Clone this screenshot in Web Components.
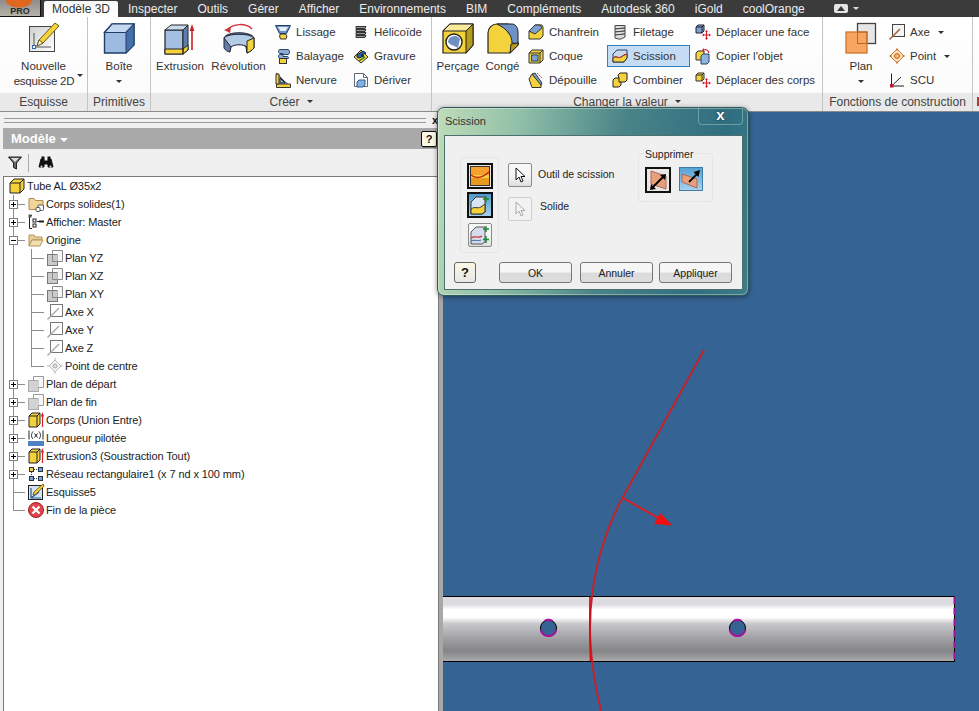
<!DOCTYPE html>
<html lang="fr">
<head>
<meta charset="utf-8">
<title>Scission</title>
<style>
  html, body { margin: 0; height: 100%; overflow: hidden; background: #f0f0f0; }
  body { font: 12px "Liberation Sans", Arial, sans-serif; color: #333; }
</style>
</head>
<body>
<cad-app>
  <cad-tabbar>
    <cad-tab active>Modèle 3D</cad-tab>
    <cad-tab>Inspecter</cad-tab>
    <cad-tab>Outils</cad-tab>
    <cad-tab>Gérer</cad-tab>
    <cad-tab>Afficher</cad-tab>
    <cad-tab>Environnements</cad-tab>
    <cad-tab>BIM</cad-tab>
    <cad-tab>Compléments</cad-tab>
    <cad-tab>Autodesk 360</cad-tab>
    <cad-tab>iGold</cad-tab>
    <cad-tab>coolOrange</cad-tab>
  </cad-tabbar>

  <cad-ribbon>
    <cad-panel label="Esquisse" style="width:88px">
      <cad-big icon="sketch" style="width:87px">Nouvelle<br><span style="margin-left:10px;letter-spacing:-.25px">esquisse 2D<cad-caret high></cad-caret></span></cad-big>
    </cad-panel>
    <cad-panel label="Primitives" style="width:63px">
      <cad-big icon="box" style="width:62px">Boîte<br><cad-caret></cad-caret></cad-big>
    </cad-panel>
    <cad-panel label="Créer" menu style="width:281px">
      <cad-big icon="extrude" style="width:50px;margin-left:4px">Extrusion</cad-big>
      <cad-big icon="revolve" style="width:59px;margin-left:4px">Révolution</cad-big>
      <cad-col style="width:78px;margin-left:2px">
        <cad-tool icon="loft">Lissage</cad-tool>
        <cad-tool icon="sweep">Balayage</cad-tool>
        <cad-tool icon="rib">Nervure</cad-tool>
      </cad-col>
      <cad-col>
        <cad-tool icon="coil">Hélicoïde</cad-tool>
        <cad-tool icon="emboss">Gravure</cad-tool>
        <cad-tool icon="derive">Dériver</cad-tool>
      </cad-col>
    </cad-panel>
    <cad-panel label="Changer la valeur" menu style="width:391px">
      <cad-big icon="hole" style="width:46px;margin-left:3px">Perçage</cad-big>
      <cad-big icon="fillet" style="width:39px;margin-left:2px">Congé</cad-big>
      <cad-col style="width:84px;margin-left:1px">
        <cad-tool icon="chamfer">Chanfrein</cad-tool>
        <cad-tool icon="shell">Coque</cad-tool>
        <cad-tool icon="draft">Dépouille</cad-tool>
      </cad-col>
      <cad-col style="width:83px">
        <cad-tool icon="thread">Filetage</cad-tool>
        <cad-tool icon="split" active>Scission</cad-tool>
        <cad-tool icon="combine">Combiner</cad-tool>
      </cad-col>
      <cad-col>
        <cad-tool icon="moveface">Déplacer une face</cad-tool>
        <cad-tool icon="copy">Copier l'objet</cad-tool>
        <cad-tool icon="movebody">Déplacer des corps</cad-tool>
      </cad-col>
    </cad-panel>
    <cad-panel label="Fonctions de construction" style="width:150px">
      <cad-big icon="plane" style="width:50px;margin-left:13px">Plan<br><cad-caret></cad-caret></cad-big>
      <cad-col style="margin-left:-2px">
        <cad-tool icon="axis">Axe<cad-caret side></cad-caret></cad-tool>
        <cad-tool icon="point">Point<cad-caret side></cad-caret></cad-tool>
        <cad-tool icon="ucs">SCU</cad-tool>
      </cad-col>
    </cad-panel>
  </cad-ribbon>

  <cad-main>
    <cad-browser>
      <cad-tree-row icon="part" root>Tube AL Ø35x2</cad-tree-row>
      <cad-tree-row icon="bodies" toggle="plus">Corps solides(1)</cad-tree-row>
      <cad-tree-row icon="viewrep" toggle="plus">Afficher: Master</cad-tree-row>
      <cad-tree-row icon="folder" toggle="minus">Origine</cad-tree-row>
      <cad-tree-row icon="workplane" child>Plan YZ</cad-tree-row>
      <cad-tree-row icon="workplane" child>Plan XZ</cad-tree-row>
      <cad-tree-row icon="workplane" child>Plan XY</cad-tree-row>
      <cad-tree-row icon="workaxis" child>Axe X</cad-tree-row>
      <cad-tree-row icon="workaxis" child>Axe Y</cad-tree-row>
      <cad-tree-row icon="workaxis" child>Axe Z</cad-tree-row>
      <cad-tree-row icon="center" child last>Point de centre</cad-tree-row>
      <cad-tree-row icon="plane2" toggle="plus">Plan de départ</cad-tree-row>
      <cad-tree-row icon="plane2" toggle="plus">Plan de fin</cad-tree-row>
      <cad-tree-row icon="feature" toggle="plus">Corps (Union Entre)</cad-tree-row>
      <cad-tree-row icon="param" toggle="plus">Longueur pilotée</cad-tree-row>
      <cad-tree-row icon="feature" toggle="plus">Extrusion3 (Soustraction Tout)</cad-tree-row>
      <cad-tree-row icon="pattern" toggle="plus">Réseau rectangulaire1 (x 7 nd x 100 mm)</cad-tree-row>
      <cad-tree-row icon="sketchnode">Esquisse5</cad-tree-row>
      <cad-tree-row icon="end" end>Fin de la pièce</cad-tree-row>
    </cad-browser>
    <cad-viewport></cad-viewport>
  </cad-main>

  <cad-dialog heading="Scission"></cad-dialog>
</cad-app>

<script>
const Y = "#f4d23c", R = "#d8202a";

// every icon: [viewBox size, svg markup]
const ICONS = {
  sketch: [32, `<defs><linearGradient id="g" x1="0" y1="0" x2="1" y2="1"><stop offset="0" stop-color="#cfcfcf"/><stop offset="1" stop-color="#fff"/></linearGradient></defs>
    <rect x="1.500" y="4.500" width="25" height="25" fill="url(#g)" stroke="#444"/>
    <path d="M6 11v14h17" fill="none" stroke="#555"/><rect x="4.500" y="23.500" width="3" height="3" fill="#fff" stroke="#2a62b8"/>
    <path d="M27 1l4 3-16 17-6 3 2-6z" fill="${Y}" stroke="#6b5a14"/><path d="M9 24l2-6 4 3z" fill="#fff" stroke="#6b5a14"/>`],
  box: [32, `<path d="M1.500 10.500L9 2h22v21l-8 8H1.500z" fill="#9dbbe0" stroke="#1f3c6b" stroke-width="1.400"/><path d="M1.500 10.500H23L31 2H9z" fill="#c6d8ef" stroke="#1f3c6b" stroke-width="1.200"/><path d="M23 10.500L31 2v21l-8 8z" fill="#456fa8" stroke="#1f3c6b"/>`],
  extrude: [32, `<path d="M1 8h18v24H1z" fill="#a3bfe2" stroke="#222" stroke-width="1.200"/><path d="M1 8l6-5h17l-5 5z" fill="#c9daef" stroke="#222"/><path d="M19 8l5-5v25l-5 4z" fill="#5d7fb0" stroke="#222"/><path d="M1 27h18v5H1zM19 27l5-4v5l-5 4z" fill="${Y}" stroke="#222"/><path d="M28 28V6" stroke="#c8202a" stroke-width="1.600"/><path d="M25.600 9L28 2l2.400 7z" fill="#c8202a"/>`],
  revolve: [32, `<path d="M4 8C10 1 23 1 29 7" fill="none" stroke="#d0343a" stroke-width="1.500"/><path d="M1 8l7-3-1 6z" fill="#d0343a"/>
    <path d="M1 16c2-7 28-7 30 0v10c-3 3-5 4-7 5l-1-6c-3-4-12-4-15 0l-1 5c-2 0-5-2-6-4z" fill="#5f7ea8" stroke="#223"/><path d="M1 16c4-5 26-5 30 0l-7 9c-4-3-12-3-16 0z" fill="#b4cbe5" stroke="#223"/><path d="M24 19l7-3v10c-2 2-4 4-7 5z" fill="${Y}" stroke="#222"/>`],
  hole: [32, `<path d="M1 9L8 2h23v21l-7 8H1z" fill="${Y}" stroke="#222" stroke-width="1.200"/><path d="M1 9h23l7-7H8z" fill="#f9ea9a" stroke="#222"/><path d="M24 9l7-7v21l-7 8z" fill="#b79b1c" stroke="#222"/><circle cx="12" cy="20" r="8" fill="#fff" stroke="#222" stroke-width="1.400"/><path d="M6 20a6.500 6.500 0 0 1 12-3l-2 9c-5-3-8-3-10-6z" fill="#6e8fc0"/>`],
  fillet: [32, `<path d="M1 31V11C1 6 5 2 10 2h11v8l10 10v3l-8 8z" fill="${Y}" stroke="#222" stroke-width="1.200"/><path d="M10 2h15c3 0 6 3 6 8v12l-6-1c0-8-5-14-15-19z" fill="#6f92c6" stroke="#222"/><path d="M23 31l8-8v-2l-7 1z" fill="#b79b1c" stroke="#222"/>`],
  loft: [16, `<path d="M.5 1.500h15l-4 8h-7z" fill="#6d93c6" stroke="#223f6b"/><path d="M3 3h10l-2.500 4h-5z" fill="#e6eef8"/><path d="M5.500 10h5l1.500 2-1 3H5.500l-1-3z" fill="${Y}" stroke="#333"/>`],
  sweep: [16, `<path d="M5 1.500h8c2 0 2 5 0 5H8v2h4c2 0 2 2 1 2H5C3 10 3 6 5 6.500h3v-1H5C3 5 3 1 5 1.500z" fill="#8fadd3" stroke="#2a446c"/><rect x="4.500" y="10.500" width="7" height="5" fill="${Y}" stroke="#333"/>`],
  rib: [16, `<path d="M1.500 1L9 9l6 5H1.500z" fill="#cfdcf0" stroke="#223"/><path d="M1.500 12h14v3.500H1.500z" fill="${Y}" stroke="#333"/><path d="M1 2h3v10H1z" fill="${Y}" stroke="#333"/><path d="M5 6l5 5H5z" fill="#8fadd3" stroke="#223"/>`],
  coil: [16, `<g fill="#999" stroke="#333"><path d="M3 2.500h10l-1 2H3z"/><path d="M3 5.500h10l-1 2H3z"/><path d="M3 8.500h10l-1 2H3z"/><path d="M3 11.500h10l-1 2H3z"/></g>`],
  emboss: [16, `<path d="M1 9l7-7 7 7-7 6z" fill="${Y}" stroke="#333"/><path d="M4 7l6-4 3 2-5 2 3 1-5 2-2-1z" fill="#2e66ae" stroke="#123"/><path d="M6 13l6-4" stroke="#2a7a2a" stroke-width="1.400"/>`],
  derive: [16, `<path d="M1.500 1.500h9l4 4v9h-13z" fill="#fff" stroke="#667"/><path d="M10.500 1.500v4h4" fill="none" stroke="#667"/><path d="M4 10l2-2h6v5l-2 2H4z" fill="#86b1de" stroke="#2b5a90"/>`],
  chamfer: [16, `<path d="M1 7l6-6h7l1 2v9l-3 3H1z" fill="${Y}" stroke="#333"/><path d="M1 7l6-6h5l2 3-7 6z" fill="#7da2d2" stroke="#333"/>`],
  shell: [16, `<path d="M1 5l3-3h11v10l-3 3H1z" fill="${Y}" stroke="#333"/><path d="M1 5h11l3-3" fill="none" stroke="#333"/><path d="M12 5v10" stroke="#333"/><rect x="3.500" y="7" width="6.500" height="6" fill="#7da2d2" stroke="#26456f"/>`],
  draft: [16, `<path d="M1 7l3-5 9 10v3.500H4z" fill="${Y}" stroke="#333"/><path d="M4 2l3-1 7 10-1 2z" fill="#7da2d2" stroke="#333"/><path d="M9 1l5 5" stroke="#c8303a" stroke-dasharray="2 1" fill="none"/>`],
  thread: [16, `<g fill="#ddd" stroke="#444"><path d="M3 1.500h10v2.500L3 5z"/><path d="M3 5l10-1v3L3 8z"/><path d="M3 8l10-1v3L3 11z"/><path d="M3 11l10-1v3l-4 2H6l-3-1z"/></g>`],
  split: [16, `<path d="M1 6l4-4h10v8l-3 4H1z" fill="#c8d7ea" stroke="#24456f"/><path d="M1 10c3-3 5 1 8-1l3-2 3-1v4l-3 4H1z" fill="${Y}" stroke="#333"/><path d="M1 10c3-3 5 1 8-1 2-1 3-2 6-3" fill="none" stroke="#c8303a"/>`],
  combine: [16, `<path d="M1 8l2-2h6v7l-2 2H1z" fill="${Y}" stroke="#222"/><path d="M6 3l2-2h7v7l-2 2H7V6z" fill="${Y}" stroke="#222"/>`],
  moveface: [16, `<path d="M1 3l2-2h6v6l-2 2H1z" fill="#7da2d2" stroke="#223"/><path d="M1 3h6v6M7 3l2-2" fill="none" stroke="#223"/><path d="M11.500 7v8M8 11h7" stroke="${R}" stroke-width="1.200"/><path d="M11.500 6l-1.500 2h3zM11.500 16l-1.500-2h3zM7 11l2-1.500v3zM16 11l-2-1.500v3z" fill="${R}"/>`],
  copy: [16, `<path d="M1 5l2-2h6v7l-2 2H1z" fill="${Y}" stroke="#333"/><path d="M6 8l2-2h6v8l-2 2H6z" fill="#8fb4de" stroke="#24456f"/><path d="M9 2c2-1 4 0 5 3" fill="none" stroke="${R}" stroke-width="1.200"/><path d="M9 0v4l-2-2z" fill="${R}"/>`],
  movebody: [16, `<path d="M1 3l2-2h6v6l-2 2H1z" fill="${Y}" stroke="#333"/><path d="M1 3h6v6M7 3l2-2" fill="none" stroke="#333"/><path d="M11.500 7v8M8 11h7" stroke="${R}" stroke-width="1.200"/><path d="M11.500 6l-1.500 2h3zM11.500 16l-1.500-2h3zM7 11l2-1.500v3zM16 11l-2-1.500v3z" fill="${R}"/>`],
  axis: [16, `<rect x="3.500" y=".5" width="12" height="12" fill="#f4f4f4" stroke="#444"/><path d="M.5 15.500L11 5" stroke="#a5683a" stroke-width="1.600"/>`],
  point: [16, `<path d="M8 1l7 7-7 7-7-7z" fill="#fbe3c6" stroke="#d6792c"/><circle cx="8" cy="8" r="2.500" fill="#f7b36b" stroke="#c76a1f"/><path d="M0 8h3M13 8h3M8 0v3M8 13v3" stroke="#d6792c"/>`],
  ucs: [16, `<path d="M2.500 14V1.500M2.500 14H15M2.500 14L12 5" stroke="#222" fill="none"/><rect x="1" y="12" width="3.500" height="3.500" fill="#b81c30"/>`],
  plane: [32, `<rect x="12.500" y="1.500" width="18" height="20" fill="#e6e6e6" stroke="#444" stroke-width="1.300"/><rect x="1" y="10" width="21" height="21" fill="#f6a661" stroke="#d0742a" stroke-width="1.300"/><rect x="12.500" y="10" width="9.500" height="11.500" fill="none" stroke="#b7692c"/>`],
  part: [16, `<path d="M1 5l4-4h10v10l-4 4H1z" fill="${Y}" stroke="#222"/><path d="M1 5h10l4-4M11 5v10" fill="none" stroke="#222"/>`],
  bodies: [16, `<path d="M1 2.500h5l1.500 2H15v9H1z" fill="#f0d498" stroke="#a98c50"/><rect x="10" y="9" width="5.500" height="5.500" rx="1" fill="#fff" stroke="#555"/><rect x="8" y="11.500" width="4" height="4" rx="1" fill="#fff" stroke="#555"/>`],
  viewrep: [16, `<path d="M4 1.500H1.500v13H4M9 7.500h2" fill="none" stroke="#222"/><rect x=".5" y=".5" width="3" height="3" fill="#555"/><rect x="5" y="5" width="3" height="3" fill="#fff" stroke="#222"/><rect x="5" y="10" width="3" height="3" fill="#fff" stroke="#222"/><path d="M11 7.500h5" stroke="#222" stroke-width="2"/>`],
  folder: [16, `<path d="M1 3h5l1 2h7v3H4l-3 6z" fill="#e9cf94" stroke="#b3955a"/><path d="M1 14l3-6h11l-3 6z" fill="#f2dfaf" stroke="#b3955a"/>`],
  workplane: [16, `<rect x=".5" y="4.500" width="10" height="11" fill="#cacaca" stroke="#777"/><path d="M10.500 .5h5v11h-5z" fill="#f6f6f6"/><path d="M5.500 .5h10v11h-10zM5.500 4.500v7h5" fill="none" stroke="#8a8a8a"/>`],
  plane2: [16, `<rect x=".5" y="4.500" width="10" height="11" fill="#d2d2d2" stroke="#aaa"/><path d="M10.500 .5h5v11h-5z" fill="#f6f6f6"/><path d="M5.500 4.500v-4h10v11h-5" fill="none" stroke="#999"/>`],
  workaxis: [16, `<rect x="3.500" y=".5" width="12" height="12" fill="#fff" stroke="#777"/><path d="M.5 15.500L12 4" stroke="#aaa" stroke-width="1.500"/>`],
  center: [16, `<path d="M8 2l6 6-6 6-6-6z" fill="#f4f4f4" stroke="#bbb"/><circle cx="8" cy="8" r="2" fill="#ddd" stroke="#aaa"/><path d="M0 8h2M14 8h2M8 0v2M8 14v2" stroke="#bbb"/>`],
  feature: [16, `<path d="M1 4l3-3h8v11l-3 3H1z" fill="${Y}" stroke="#222"/><path d="M1 4h8l3-3M9 4v11" fill="none" stroke="#222"/><path d="M14.500 15V3" stroke="${R}" stroke-width="1.200"/><path d="M12.800 4.500L14.500 0l1.500 4.500z" fill="${R}"/>`],
  param: [16, `<rect x="0" y="11" width="16" height="5" fill="#4f83c4"/><path d="M1 .5v9M15 .5v9" stroke="#222"/><path d="M5 1.500C3 4 3 7 5 9M11 1.500c2 2.500 2 5.500 0 7.500M6.500 3.500l3 4M9.500 3.500l-3 4" fill="none" stroke="#222"/>`],
  pattern: [16, `<rect x="1.500" y="1.500" width="4" height="4" fill="${Y}" stroke="#333"/><rect x="10.500" y="1.500" width="4" height="4" fill="#7da2d2" stroke="#234"/><rect x="1.500" y="10.500" width="4" height="4" fill="#7da2d2" stroke="#234"/><rect x="10.500" y="10.500" width="4" height="4" fill="#7da2d2" stroke="#234"/><path d="M6 3.500h4M3.500 6v4M6 12.500h4" stroke="#333" stroke-dasharray="1 1"/>`],
  sketchnode: [16, `<rect x=".5" y="1.500" width="14" height="14" fill="#d5e4f5" stroke="#222"/><path d="M3 4v10h10M3 14l8-6" fill="none" stroke="#2a5a98" stroke-width="1.200"/><path d="M15 0l1 2-8 8-3 1 1-3z" fill="${Y}" stroke="#7a6514"/>`],
  end: [16, `<circle cx="8" cy="8" r="7.500" fill="#e0454c" stroke="#a11d24"/><path d="M4.500 4.500l7 7M11.500 4.500l-7 7" stroke="#fff" stroke-width="2.200"/>`],
  funnel: [14, `<path d="M.5 1h13L8.500 7v6l-3-1.500V7z" fill="#666" stroke="#222"/><path d="M3 2h8L7 6z" fill="#ddd"/>`],
  binoculars: [16, `<path d="M1 12l2-8h3v8H1zM10 4h3l2 8h-5zM6 6h4v3H6z" fill="#111" stroke="#111"/><rect x="3.500" y="1.500" width="3" height="3" fill="#111"/><rect x="9.500" y="1.500" width="3" height="3" fill="#111"/><circle cx="3.500" cy="11.500" r="1" fill="#ddd"/><circle cx="12.500" cy="11.500" r="1" fill="#ddd"/>`],
  cursor: [16, `<path d="M4 1v12l3-3 2 5 2-1-2-4.500h4z" fill="#fff" stroke="#111"/>`],
  cursoroff: [16, `<path d="M4 1v12l3-3 2 5 2-1-2-4.500h4z" fill="#f4f4f4" stroke="#aaa"/>`],
  surface: [20, `<rect x=".5" y=".5" width="19" height="19" fill="${Y}" stroke="#333"/><rect x="1" y="1" width="18" height="8" fill="#f6a030"/><rect x="1" y="12" width="18" height="7" fill="#e89a1e"/><path d="M1 9c5 4 11 3 18-3" fill="none" stroke="#c41e20" stroke-width="1.300"/>`],
  solidplus: [20, `<path d="M1 7l5-5h9v15l-3 2H1z" fill="#d7e4f3" stroke="#333"/><path d="M1 14c4-3 6 0 10-2l4-3v8l-3 2H1z" fill="${Y}" stroke="#333"/><path d="M16 1v6M13 4h6" stroke="#1d8a2e" stroke-width="1.500"/>`],
  surfplus: [20, `<path d="M1 7l5-5h9v15l-3 2H1z" fill="#d7dcec" stroke="#555"/><path d="M1 13c5-3 7 1 11-2" fill="none" stroke="#c8303a" stroke-width="1.200"/><path d="M1 16c4-2 7 1 10-1" fill="none" stroke="#3a6fb0"/><path d="M16 1v6M13 4h6M16 11v7M13 14.500h6" stroke="#1d8a2e" stroke-width="1.500"/>`],
  delone: [20, `<path d="M3 1l15 5v13L3 14z" fill="#e7a078" stroke="#a66"/><path d="M4 18L15 7" stroke="#000" stroke-width="1.800"/><path d="M2 20l1-6 5 5zM18 4l-1 6-5-5z" fill="#000"/>`],
  deltwo: [20, `<path d="M1 5l15 5v9L1 13z" fill="#e7a078" stroke="#a66"/><path d="M8 13L16 5" stroke="#000" stroke-width="1.800"/><path d="M19 1l-1.500 7-5-5z" fill="#000"/>`]
};

class CadIcon extends HTMLElement {
  constructor() {
    super();
    this.attachShadow({ mode: "open" });
  }

  connectedCallback() {
    const [vb, markup] = ICONS[this.getAttribute("name")];
    const size = this.getAttribute("size") || vb;
    this.shadowRoot.innerHTML = `
    <style>:host { display: inline-flex; flex: none; } svg { display: block; overflow: visible; }</style>
    <svg viewBox="0 0 ${vb} ${vb}" width="${size}" height="${size}">${markup}</svg>`;
  }
}

class CadCaret extends HTMLElement {
  constructor() {
    super();
    this.attachShadow({ mode: "open" });
    this.shadowRoot.innerHTML = `
    <style>
      :host {
        display: inline-block;
        width: 0;
        height: 0;
        border-top: 3px solid #333;
        border-left: 3px solid transparent;
        border-right: 3px solid transparent;
        vertical-align: middle;
      }
      :host([high]) { vertical-align: 8px; margin-left: 3px; }
      :host([side]) { margin-left: 8px; }
    </style>`;
  }
}

class CadApp extends HTMLElement {
  constructor() {
    super();
    this.attachShadow({ mode: "open" });
    this.shadowRoot.innerHTML = `
    <style>
      :host { display: flex; flex-direction: column; width: 979px; height: 711px; position: relative; overflow: hidden; }
    </style>
    <slot></slot>`;
  }
}

class CadTabbar extends HTMLElement {
  constructor() {
    super();
    this.attachShadow({ mode: "open" });
    this.shadowRoot.innerHTML = `
    <style>
      :host { display: flex; height: 17px; flex: none; background: #3b3b3b; overflow: hidden; }
      .pro {
        width: 40px;
        height: 16px;
        margin-right: 3px;
        flex: none;
        border: solid #111;
        border-width: 0 1px 1px 0;
        background:
          radial-gradient(ellipse 14px 8px at 19px 0, #e0671e 0 90%, transparent 100%),
          linear-gradient(#8d8d8d, #b5b2a8);
        display: flex;
        justify-content: center;
        align-items: flex-end;
        font: bold 9px "Liberation Sans", sans-serif;
        color: #2a2a2a;
      }
      .extra { display: flex; align-items: center; gap: 5px; margin-left: 19px; }
    </style>
    <div class="pro">PRO</div>
    <slot></slot>
    <div class="extra">
      <svg width="14" height="9" viewBox="0 0 14 9"><rect width="14" height="9" rx="2" fill="#e4e4e4"/><path d="M3 7l4-5 4 5z" fill="#3b3b3b"/></svg>
      <cad-caret style="border-top-color:#ddd"></cad-caret>
    </div>`;
  }
}

class CadTab extends HTMLElement {
  constructor() {
    super();
    this.attachShadow({ mode: "open" });
    this.shadowRoot.innerHTML = `
    <style>
      :host { display: flex; align-items: center; padding: 0 10px; color: #ececec; white-space: nowrap; }
      :host([active]) {
        color: #333;
        margin: 1px 0 0;
        padding: 0 8px;
        background: linear-gradient(#f6f6f6, #ffffff);
        border-radius: 2px 2px 0 0;
      }
    </style>
    <slot></slot>`;
  }
}

class CadRibbon extends HTMLElement {
  constructor() {
    super();
    this.attachShadow({ mode: "open" });
    this.shadowRoot.innerHTML = `
    <style>
      :host {
        display: flex;
        height: 95px;
        flex: none;
        background: linear-gradient(#fff, #fafafa);
        border-bottom: 1px solid #8b8b8b;
        box-sizing: border-box;
      }
      .more { flex: 1; display: flex; align-items: flex-end; }
      .more i { display: block; width: 100%; height: 18px; background: #e9e9e9; }
      .more b { display: block; width: 2px; height: 9px; margin: 4px 0 0 4px; background: #b03a2a; }
    </style>
    <slot></slot>
    <div class="more"><i><b></b></i></div>`;
  }
}

class CadPanel extends HTMLElement {
  constructor() {
    super();
    this.attachShadow({ mode: "open" });
  }

  connectedCallback() {
    const menu = this.hasAttribute("menu") ? `<cad-caret style="margin-left:7px"></cad-caret>` : "";
    this.shadowRoot.innerHTML = `
    <style>
      :host {
        display: flex;
        flex-direction: column;
        flex: none;
        box-sizing: border-box;
        border-right: 1px solid #c4c4c4;
      }
      .tools { flex: 1; display: flex; padding-top: 3px; min-height: 0; font-size: 11.5px; }
      footer {
        height: 18px;
        flex: none;
        box-sizing: border-box;
        padding-bottom: 1px;
        background: #e9e9e9;
        color: #444;
        display: flex;
        justify-content: center;
        align-items: center;
        white-space: nowrap;
      }
    </style>
    <div class="tools"><slot></slot></div>
    <footer>${this.getAttribute("label")}${menu}</footer>`;
  }
}

class CadBig extends HTMLElement {
  constructor() {
    super();
    this.attachShadow({ mode: "open" });
  }

  connectedCallback() {
    this.shadowRoot.innerHTML = `
    <style>
      :host {
        display: flex;
        flex-direction: column;
        align-items: center;
        flex: none;
        padding-top: 2px;
        text-align: center;
        line-height: 15px;
        white-space: nowrap;
      }
      cad-icon { margin-bottom: 5px; }
    </style>
    <cad-icon name="${this.getAttribute("icon")}" size="32"></cad-icon>
    <div><slot></slot></div>`;
  }
}

class CadCol extends HTMLElement {
  constructor() {
    super();
    this.attachShadow({ mode: "open" });
    this.shadowRoot.innerHTML = `
    <style>:host { display: flex; flex-direction: column; flex: none; }</style>
    <slot></slot>`;
  }
}

class CadTool extends HTMLElement {
  constructor() {
    super();
    this.attachShadow({ mode: "open" });
  }

  connectedCallback() {
    this.shadowRoot.innerHTML = `
    <style>
      :host {
        display: flex;
        align-items: center;
        gap: 5px;
        box-sizing: border-box;
        height: 22px;
        margin: 1px 0;
        padding: 0 4px;
        border: 1px solid transparent;
        white-space: nowrap;
      }
      :host([active]) { background: #c5dcf5; border-color: #3b7db8; }
    </style>
    <cad-icon name="${this.getAttribute("icon")}"></cad-icon>
    <span><slot></slot></span>`;
  }
}

class CadMain extends HTMLElement {
  constructor() {
    super();
    this.attachShadow({ mode: "open" });
    this.shadowRoot.innerHTML = `
    <style>:host { display: flex; flex: 1; min-height: 0; }</style>
    <slot></slot>`;
  }
}

class CadBrowser extends HTMLElement {
  constructor() {
    super();
    this.attachShadow({ mode: "open" });
    this.shadowRoot.innerHTML = `
    <style>
      :host {
        display: flex;
        flex-direction: column;
        width: 443px;
        flex: none;
        box-sizing: border-box;
        padding-left: 3px;
        border-right: 4px solid #a8a8a8;
        background: #f0f0f0;
      }
      .grip {
        height: 16px;
        flex: none;
        display: flex;
        align-items: center;
        gap: 6px;
        margin-right: 1px;
        font: bold 11px "Liberation Sans", sans-serif;
        color: #111;
      }
      .grip i { flex: 1; height: 3px; margin-left: 1px; border: solid #9a9a9a; border-width: 1px 0; }
      .title {
        height: 21px;
        flex: none;
        margin-right: 1px;
        background: #a9a9a9;
        display: flex;
        align-items: center;
        justify-content: space-between;
        padding: 0 1px 0 8px;
        color: #fff;
        font: bold 13px "Liberation Sans", sans-serif;
      }
      .title cad-caret { border-top-color: #fff; margin-left: 4px; border-top-width: 4px; border-left-width: 4px; border-right-width: 4px; }
      .bar { height: 27px; flex: none; box-sizing: border-box; display: flex; align-items: center; padding-left: 5px; }
      .bar span { width: 1px; height: 18px; background: #aaa; margin: 0 9px 0 6px; }
      .tree {
        flex: 1;
        background: #fff;
        border: solid #7b7b7b;
        border-width: 1px 1px 0 1px;
        color: #222;
        overflow: hidden;
      }
    </style>
    <div class="grip"><i></i>x</div>
    <div class="title"><div>Modèle<cad-caret></cad-caret></div><cad-help></cad-help></div>
    <div class="bar"><cad-icon name="funnel"></cad-icon><span></span><cad-icon name="binoculars"></cad-icon></div>
    <div class="tree"><slot></slot></div>`;
  }
}

class CadTreeRow extends HTMLElement {
  constructor() {
    super();
    this.attachShadow({ mode: "open" });
  }

  connectedCallback() {
    const toggle = this.getAttribute("toggle");
    const sign = toggle ? `<b class="sign ${toggle}"></b>` : "";
    this.shadowRoot.innerHTML = `
    <style>
      :host {
        --line: #8c8c8c;
        display: flex;
        align-items: center;
        height: 18px;
        padding-left: 24px;
        font-size: 11px;
        letter-spacing: -.1px;
        white-space: nowrap;
        background:
          linear-gradient(var(--line), var(--line)) 9px 0 / 1px 100% no-repeat,
          linear-gradient(var(--line), var(--line)) 9px 9px / 12px 1px no-repeat;
      }
      :host([root]) { padding-left: 5px; background: none; }
      :host([end]) {
        background:
          linear-gradient(var(--line), var(--line)) 9px 0 / 1px 9px no-repeat,
          linear-gradient(var(--line), var(--line)) 9px 9px / 12px 1px no-repeat;
      }
      :host([child]) {
        padding-left: 43px;
        background:
          linear-gradient(var(--line), var(--line)) 9px 0 / 1px 100% no-repeat,
          linear-gradient(var(--line), var(--line)) 27px 0 / 1px 100% no-repeat,
          linear-gradient(var(--line), var(--line)) 27px 9px / 13px 1px no-repeat;
      }
      :host([last]) {
        background:
          linear-gradient(var(--line), var(--line)) 9px 0 / 1px 100% no-repeat,
          linear-gradient(var(--line), var(--line)) 27px 0 / 1px 9px no-repeat,
          linear-gradient(var(--line), var(--line)) 27px 9px / 13px 1px no-repeat;
      }
      .sign {
        width: 7px;
        height: 7px;
        margin-left: -19px;
        margin-right: 10px;
        border: 1px solid #808080;
        background:
          linear-gradient(#000, #000) center / 5px 1px no-repeat,
          #fff;
        flex: none;
      }
      .sign.plus {
        background:
          linear-gradient(#000, #000) center / 5px 1px no-repeat,
          linear-gradient(#000, #000) center / 1px 5px no-repeat,
          #fff;
      }
      span { margin-left: 2px; }
    </style>
    ${sign}<cad-icon name="${this.getAttribute("icon")}"></cad-icon><span><slot></slot></span>`;
  }
}

class CadViewport extends HTMLElement {
  constructor() {
    super();
    this.attachShadow({ mode: "open" });
    this.shadowRoot.innerHTML = `
    <style>
      :host { display: block; flex: 1; background: #356494; }
      svg { display: block; }
    </style>
    <svg viewBox="443 112 536 599" width="536" height="599">
      <defs>
        <linearGradient id="tube" x1="0" y1="0" x2="0" y2="1">
          <stop offset="0" stop-color="#dcdbe0"/>
          <stop offset=".12" stop-color="#dcdbe0"/>
          <stop offset=".2" stop-color="#fff"/>
          <stop offset=".32" stop-color="#fff"/>
          <stop offset=".42" stop-color="#c8c8cc"/>
          <stop offset=".65" stop-color="#a0a0a4"/>
          <stop offset=".84" stop-color="#858588"/>
          <stop offset="1" stop-color="#ababae"/>
        </linearGradient>
      </defs>
      <rect x="443" y="596.500" width="511.500" height="65" fill="url(#tube)"/>
      <path d="M443 596.500h511.500v65H443" fill="none" stroke="#000"/>
      <path d="M954.500 597v64" stroke="#a5109c" stroke-width="2" stroke-dasharray="7 4" fill="none"/>
      <circle cx="548.500" cy="628" r="8" fill="#356494" stroke="#000"/>
      <circle cx="737.500" cy="628" r="8" fill="#356494" stroke="#000"/>
      <g fill="none" stroke="#a5109c" stroke-width="2.200">
        <path d="M540.750 630A8 8 0 0 0 556.250 630M544.600 621A8 8 0 0 1 552.400 621"/>
        <path d="M729.750 630A8 8 0 0 0 745.250 630M733.600 621A8 8 0 0 1 741.400 621"/>
      </g>
      <path d="M704 350L623 497C606 528 590 575 590 628C590 655 595 685 601 711" fill="none" stroke="#c4222a" stroke-width="2"/>
      <path d="M590 597C589.500 618 590 640 590.500 661" fill="none" stroke="#d80c10" stroke-width="1.600"/>
      <path d="M623 498L660 519" stroke="#dc1c22" stroke-width="2"/>
      <path d="M672.500 525.500L654 524L660 513z" fill="#f01010"/>
    </svg>`;
  }
}

class CadHelp extends HTMLElement {
  constructor() {
    super();
    this.attachShadow({ mode: "open" });
    this.shadowRoot.innerHTML = `
    <style>
      :host {
        display: inline-flex;
        align-items: center;
        justify-content: center;
        width: 14px;
        height: 14px;
        background: #fbf8e4;
        border: 1px solid #111;
        border-radius: 2px;
        box-shadow: 1px 1px 0 #777;
        color: #111;
        font: bold 11px "Liberation Sans", sans-serif;
      }
    </style>
    ?`;
  }
}

class CadDialogButton extends HTMLElement {
  constructor() {
    super();
    this.attachShadow({ mode: "open" });
    this.shadowRoot.innerHTML = `
    <style>
      :host {
        display: flex;
        align-items: center;
        justify-content: center;
        box-sizing: border-box;
        width: 73px;
        height: 21px;
        border: 1px solid #777;
        border-radius: 3px;
        background: linear-gradient(#f6f6f6 0 48%, #dcdcdc 52% 100%);
        color: #222;
      }
    </style>
    <slot></slot>`;
  }
}

class CadIconButton extends HTMLElement {
  constructor() {
    super();
    this.attachShadow({ mode: "open" });
  }

  connectedCallback() {
    this.shadowRoot.innerHTML = `
    <style>
      :host {
        display: flex;
        align-items: center;
        justify-content: center;
        box-sizing: border-box;
        width: 24px;
        height: 24px;
        flex: none;
        border: 1px solid #8a8a8a;
        border-radius: 2px;
        background: linear-gradient(#f7f7f7 0 50%, #dedede);
      }
      :host([off]) { border-color: #cfcfcf; background: #f2f2f2; }
      :host([down]) { width: 26px; height: 26px; border: 2px solid #111; border-radius: 0; background: #eae7e3; }
      :host([on]) { width: 26px; height: 26px; border: 2px solid #111; border-radius: 0; background: linear-gradient(#4f9ad0, #a6d1ec); }
      :host([flat]) { border: 1px solid #3f7ba8; background: linear-gradient(#5aa1d4, #a6d1ec); border-radius: 0; }
    </style>
    <cad-icon name="${this.getAttribute("icon")}" size="${this.getAttribute("size") || 16}"></cad-icon>`;
  }
}

class CadDialog extends HTMLElement {
  constructor() {
    super();
    this.attachShadow({ mode: "open" });
  }

  connectedCallback() {
    this.shadowRoot.innerHTML = `
    <style>
      :host {
        position: absolute;
        left: 437px;
        top: 107px;
        width: 312px;
        height: 189px;
        box-sizing: border-box;
        display: flex;
        flex-direction: column;
        padding: 0 5px 5px 6px;
        border: 1px solid #2d5a58;
        border-radius: 7px;
        background: linear-gradient(100deg, #c0dcb8 0, #8fbfa8 25%, #4a8488 55%, #2f6e80 85%, #3d7d88 100%);
        box-shadow: 0 0 0 1px rgba(255, 255, 255, .35) inset, 0 1px 5px rgba(0, 0, 0, .45);
      }
      .title { height: 27px; flex: none; display: flex; justify-content: space-between; font-size: 11px; color: #333; }
      .title span { margin: 7px 0 0 1px; }
      .close {
        width: 45px;
        height: 18px;
        margin-top: -1px;
        box-sizing: border-box;
        border: 1px solid #6e9ea2;
        border-top: 0;
        border-radius: 0 0 4px 4px;
        display: flex;
        justify-content: center;
        color: #fff;
        font: bold 15px "Liberation Sans", sans-serif;
        line-height: 15px;
        text-shadow: 0 0 2px #123;
      }
      .body {
        flex: 1;
        background: #f0f0f0;
        border: 1px solid #4c6f70;
        box-sizing: border-box;
        padding-top: 17px;
        display: flex;
        flex-direction: column;
        color: #222;
        font-size: 10.5px;
      }
      .top { display: flex; height: 100px; padding-left: 15px; }
      .group {
        width: 39px;
        height: 96px;
        margin-top: 4px;
        box-sizing: border-box;
        border: 1px solid #e6e6e6;
        border-radius: 3px;
        display: flex;
        flex-direction: column;
        align-items: center;
        padding-top: 5px;
        gap: 3px;
      }
      .picks { margin: 10px 0 0 9px; display: flex; flex-direction: column; gap: 10px; }
      .pick { display: flex; align-items: center; gap: 6px; height: 24px; }
      .pick span { margin-bottom: 2px; }
      .pick + .pick { gap: 8px; }
      .pick + .pick span { margin-bottom: 6px; }
      .delete {
        position: relative;
        width: 75px;
        height: 49px;
        margin-left: auto;
        margin-right: 29px;
        box-sizing: border-box;
        border: 1px solid #e6e6e6;
        border-radius: 3px;
        display: flex;
        align-items: flex-start;
        gap: 8px;
        padding: 13px 0 0 6px;
      }
      .delete label { position: absolute; top: -6px; left: 5px; padding: 0 1px; background: #f0f0f0; line-height: 13px; }
      .foot { display: flex; align-items: center; padding-left: 9px; margin-top: 9px; gap: 7px; }
      .foot cad-help { width: 20px; height: 19px; margin-right: 16px; border-color: #666; font-size: 13px; box-shadow: none; border-radius: 3px; background: linear-gradient(#fbf8e4, #e7e7e7); }
      .foot cad-dialog-button:nth-child(2) { margin-right: 1px; }
      .foot cad-dialog-button:nth-child(4) { margin-left: -1px; }
    </style>
    <div class="title"><span>${this.getAttribute("heading")}</span><div class="close">x</div></div>
    <div class="body">
      <div class="top">
        <div class="group">
          <cad-icon-button icon="surface" size="20" down></cad-icon-button>
          <cad-icon-button icon="solidplus" size="20" on></cad-icon-button>
          <cad-icon-button icon="surfplus" size="20" style="margin-top:2px"></cad-icon-button>
        </div>
        <div class="picks">
          <div class="pick"><cad-icon-button icon="cursor"></cad-icon-button><span>Outil de scission</span></div>
          <div class="pick"><cad-icon-button icon="cursoroff" off></cad-icon-button><span>Solide</span></div>
        </div>
        <div class="delete">
          <label>Supprimer</label>
          <cad-icon-button icon="delone" size="20" down></cad-icon-button>
          <cad-icon-button icon="deltwo" size="20" flat></cad-icon-button>
        </div>
      </div>
      <div class="foot">
        <cad-help></cad-help>
        <cad-dialog-button>OK</cad-dialog-button>
        <cad-dialog-button>Annuler</cad-dialog-button>
        <cad-dialog-button>Appliquer</cad-dialog-button>
      </div>
    </div>`;
  }
}

customElements.define("cad-icon", CadIcon);
customElements.define("cad-caret", CadCaret);
customElements.define("cad-app", CadApp);
customElements.define("cad-tabbar", CadTabbar);
customElements.define("cad-tab", CadTab);
customElements.define("cad-ribbon", CadRibbon);
customElements.define("cad-panel", CadPanel);
customElements.define("cad-big", CadBig);
customElements.define("cad-col", CadCol);
customElements.define("cad-tool", CadTool);
customElements.define("cad-main", CadMain);
customElements.define("cad-browser", CadBrowser);
customElements.define("cad-tree-row", CadTreeRow);
customElements.define("cad-viewport", CadViewport);
customElements.define("cad-help", CadHelp);
customElements.define("cad-dialog-button", CadDialogButton);
customElements.define("cad-icon-button", CadIconButton);
customElements.define("cad-dialog", CadDialog);
</script>
</body>
</html>
